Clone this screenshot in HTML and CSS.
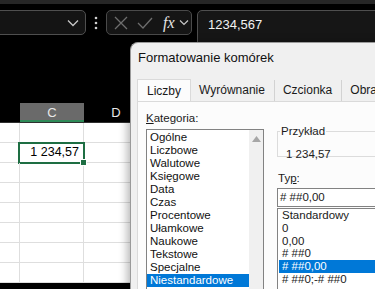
FILE: index.html
```html
<!DOCTYPE html>
<html lang="pl">
<head>
    <meta charset="UTF-8">
    <meta name="viewport" content="width=device-width, initial-scale=1.0">
    <title>Formatowanie komórek</title>
    <link rel="stylesheet" href="styles.css">
</head>
<body>
    <div class="topstrip"></div>
    <div class="toolbar">
        <div class="namebox">
            <svg class="chev" width="12" height="8" viewBox="0 0 12 8"><path d="M1 1.5 L6 6.5 L11 1.5" fill="none" stroke="#c8c8c8" stroke-width="1.3"/></svg>
        </div>
        <div class="dots">
            <svg width="4" height="14" viewBox="0 0 4 14"><circle cx="2" cy="2" r="1.3" fill="#cfcfcf"/><circle cx="2" cy="7" r="1.3" fill="#cfcfcf"/><circle cx="2" cy="12" r="1.3" fill="#cfcfcf"/></svg>
        </div>
        <div class="fx-group">
            <svg width="14" height="14" viewBox="0 0 14 14"><path d="M1 1 L13 13 M13 1 L1 13" stroke="#6e6e6e" stroke-width="1.3"/></svg>
            <svg width="16" height="12" viewBox="0 0 16 12"><path d="M1 6 L6 11 L15 1" fill="none" stroke="#6e6e6e" stroke-width="1.3"/></svg>
            <span class="fx">fx</span>
            <svg width="10" height="7" viewBox="0 0 10 7"><path d="M1 1.5 L5 5.5 L9 1.5" fill="none" stroke="#c8c8c8" stroke-width="1.2"/></svg>
        </div>
        <div class="formula">1234,567</div>
    </div>

    <div class="sheet">
        <div class="heads">
            <div class="head"></div>
            <div class="head active">C</div>
            <div class="head">D</div>
            <div class="head">E</div>
        </div>
        <div class="grid">
            <div class="cell"></div><div class="cell"></div><div class="cell"></div><div class="cell"></div>
            <div class="cell"></div><div class="cell num selected">1 234,57</div><div class="cell"></div><div class="cell"></div>
            <div class="cell"></div><div class="cell"></div><div class="cell"></div><div class="cell"></div>
            <div class="cell"></div><div class="cell"></div><div class="cell"></div><div class="cell"></div>
            <div class="cell"></div><div class="cell"></div><div class="cell"></div><div class="cell"></div>
            <div class="cell"></div><div class="cell"></div><div class="cell"></div><div class="cell"></div>
            <div class="cell"></div><div class="cell"></div><div class="cell"></div><div class="cell"></div>
            <div class="cell"></div><div class="cell"></div><div class="cell"></div><div class="cell"></div>
        </div>
    </div>

    <div class="dialog">
        <div class="dialog-title">Formatowanie komórek</div>
        <div class="tabs">
            <div class="tab current">Liczby</div>
            <div class="tab">Wyrównanie</div>
            <div class="tab">Czcionka</div>
            <div class="tab">Obramowanie</div>
        </div>
        <div class="panel">
            <div class="left">
                <div class="label"><u>K</u>ategoria:</div>
                <div class="listbox">
                    <ul class="items">
                        <li>Ogólne</li>
                        <li>Liczbowe</li>
                        <li>Walutowe</li>
                        <li>Księgowe</li>
                        <li>Data</li>
                        <li>Czas</li>
                        <li>Procentowe</li>
                        <li>Ułamkowe</li>
                        <li>Naukowe</li>
                        <li>Tekstowe</li>
                        <li>Specjalne</li>
                        <li class="picked">Niestandardowe</li>
                    </ul>
                    <div class="scroll">
                        <svg width="9" height="6" viewBox="0 0 9 6"><path d="M0 6 L4.5 0 L9 6 Z" fill="#a6a6a6"/></svg>
                    </div>
                </div>
            </div>
            <div class="right">
                <fieldset class="sample">
                    <legend>Przykład</legend>
                    <div class="sample-value">1 234,57</div>
                </fieldset>
                <div class="label type-label">Ty<u>p</u>:</div>
                <div class="type-input"># ##0,00</div>
                <ul class="type-list">
                    <li>Standardowy</li>
                    <li>0</li>
                    <li>0,00</li>
                    <li># ##0</li>
                    <li class="picked"># ##0,00</li>
                    <li># ##0;-# ##0</li>
                </ul>
            </div>
        </div>
    </div>
</body>
</html>
```

FILE: styles.css
```css
body {
    margin: 0;
    background-color: #000;
    font-family: "Liberation Sans", Arial, sans-serif;
    overflow: hidden;
    width: 375px;
    height: 289px;
    position: relative;
}
.topstrip {
    height: 4px;
    background-color: #262626;
}
.toolbar {
    display: flex;
    align-items: flex-start;
    padding-top: 6px;
    height: 33px;
}
.namebox {
    margin-left: -6px;
    width: 92px;
    height: 25px;
    box-sizing: border-box;
    border: 1px solid #4f4f4f;
    border-radius: 5px;
    background-color: #141414;
    display: flex;
    align-items: center;
    justify-content: flex-end;
    padding-right: 6px;
}
.dots {
    width: 20px;
    height: 25px;
    display: flex;
    align-items: center;
    justify-content: center;
}
.fx-group {
    width: 86px;
    height: 25px;
    box-sizing: border-box;
    border: 1px solid #4a4a4a;
    border-radius: 5px;
    background-color: #151515;
    display: flex;
    align-items: center;
    gap: 9px;
    padding-left: 7px;
}
.fx {
    font-family: "Liberation Serif", serif;
    font-style: italic;
    font-size: 16px;
    color: #e6e6e6;
    margin-left: 1px;
    margin-right: -5px;
}
.formula {
    margin-left: 5px;
    flex: 1;
    height: 33px;
    margin-right: -10px;
    box-sizing: border-box;
    border: 1px solid #4f4f4f;
    border-radius: 5px 0 0 0;
    background-color: #161616;
    color: #f2f2f2;
    font-size: 13px;
    padding: 6px 0 0 10px;
}
.sheet {
    margin-top: 60px;
}
.heads {
    display: grid;
    grid-template-columns: 20px 64px 64px 64px;
    height: 19px;
    border-bottom: 1px solid #2f2f2f;
}
.head {
    color: #e8e8e8;
    font-size: 13px;
    text-align: center;
    line-height: 19px;
}
.head.active {
    background-color: #6a6a6a;
    box-shadow: inset 0 -2px 0 #2f8a58;
}
.grid {
    display: grid;
    grid-template-columns: 20px 64px 64px 64px;
    grid-auto-rows: 20px;
    background-color: #fff;
}
.cell {
    box-sizing: border-box;
    border-right: 1px solid #dedede;
    border-bottom: 1px solid #dedede;
    font-size: 12.5px;
    line-height: 19px;
    color: #000;
    position: relative;
}
.num {
    text-align: right;
    padding-right: 4px;
}
.selected::after {
    content: "";
    position: absolute;
    left: -2px;
    top: -1px;
    right: -2px;
    bottom: -2px;
    border: 2px solid #1e6e43;
}
.selected::before {
    content: "";
    position: absolute;
    right: -4px;
    bottom: -4px;
    width: 5px;
    height: 5px;
    background-color: #1e6e43;
    border: 1px solid #fff;
    z-index: 1;
}
.dialog {
    position: absolute;
    left: 130px;
    top: 42px;
    width: 270px;
    height: 270px;
    background-color: #f0f0f0;
    border-left: 1px solid #9a9a9a;
    border-top: 1px solid #9a9a9a;
    border-radius: 8px 0 0 0;
    box-shadow: -3px 0 8px rgba(0, 0, 0, 0.28);
    color: #1a1a1a;
    font-size: 12px;
}
.dialog-title {
    height: 30px;
    line-height: 30px;
    padding-left: 7px;
    font-size: 13px;
    color: #111;
}
.tabs {
    display: flex;
    margin: 7px 0 0 6px;
    height: 21px;
}
.tab {
    padding: 0 9px 0 8px;
    line-height: 21px;
    border-right: 1px solid #d2d2d2;
    background-color: #f0f0f0;
    white-space: nowrap;
}
.tab.current {
    background-color: #fcfcfc;
    padding: 0 9px;
    border: 1px solid #dadada;
    border-bottom: none;
    margin-top: -1px;
    line-height: 22px;
}
.panel {
    margin-left: 6px;
    background-color: #fcfcfc;
    border-left: 1px solid #dadada;
    border-top: 1px solid #dadada;
    height: 200px;
    display: grid;
    grid-template-columns: 118px 1fr;
    column-gap: 13px;
    padding: 9px 0 0 8px;
}
.label {
    font-size: 11.5px;
    line-height: 15px;
}
.listbox {
    margin-top: 3px;
    height: 180px;
    box-sizing: border-box;
    border: 1px solid #828282;
    background-color: #fff;
    display: flex;
}
.items {
    list-style: none;
    margin: 0;
    padding: 1px 0 0 0;
    flex: 1;
}
.items li {
    height: 13px;
    line-height: 13px;
    font-size: 11.5px;
    padding-left: 3px;
    color: #111;
}
.picked {
    background-color: #0078d7;
    color: #fff !important;
}
.scroll {
    width: 14px;
    background-color: #f0f0f0;
    display: flex;
    justify-content: center;
    padding-top: 6px;
}
.sample {
    margin: 14px 0 0 0;
    padding: 0 0 0 8px;
    height: 32px;
    box-sizing: border-box;
    border: 1px solid #dcdcdc;
    border-right: none;
}
.sample legend {
    padding: 0 1px;
    margin-left: -6px;
    font-size: 11.5px;
    line-height: 13px;
}
.sample-value {
    font-size: 11.5px;
    line-height: 13px;
    margin-top: 10px;
    color: #222;
}
.type-label {
    margin-top: 14px;
    padding-left: 1px;
}
.type-input {
    margin-top: 2px;
    height: 19px;
    box-sizing: border-box;
    border: 1px solid #828282;
    border-right: none;
    background-color: #fff;
    font-size: 11.5px;
    line-height: 17px;
    padding-left: 2px;
}
.type-list {
    list-style: none;
    margin: 1px 0 0 0;
    padding: 0 0 0 1px;
    border: 1px solid #828282;
    border-right: none;
    background-color: #fff;
    height: 90px;
}
.type-list li {
    height: 12.8px;
    line-height: 12.8px;
    font-size: 11.5px;
    padding-left: 3px;
}
```
